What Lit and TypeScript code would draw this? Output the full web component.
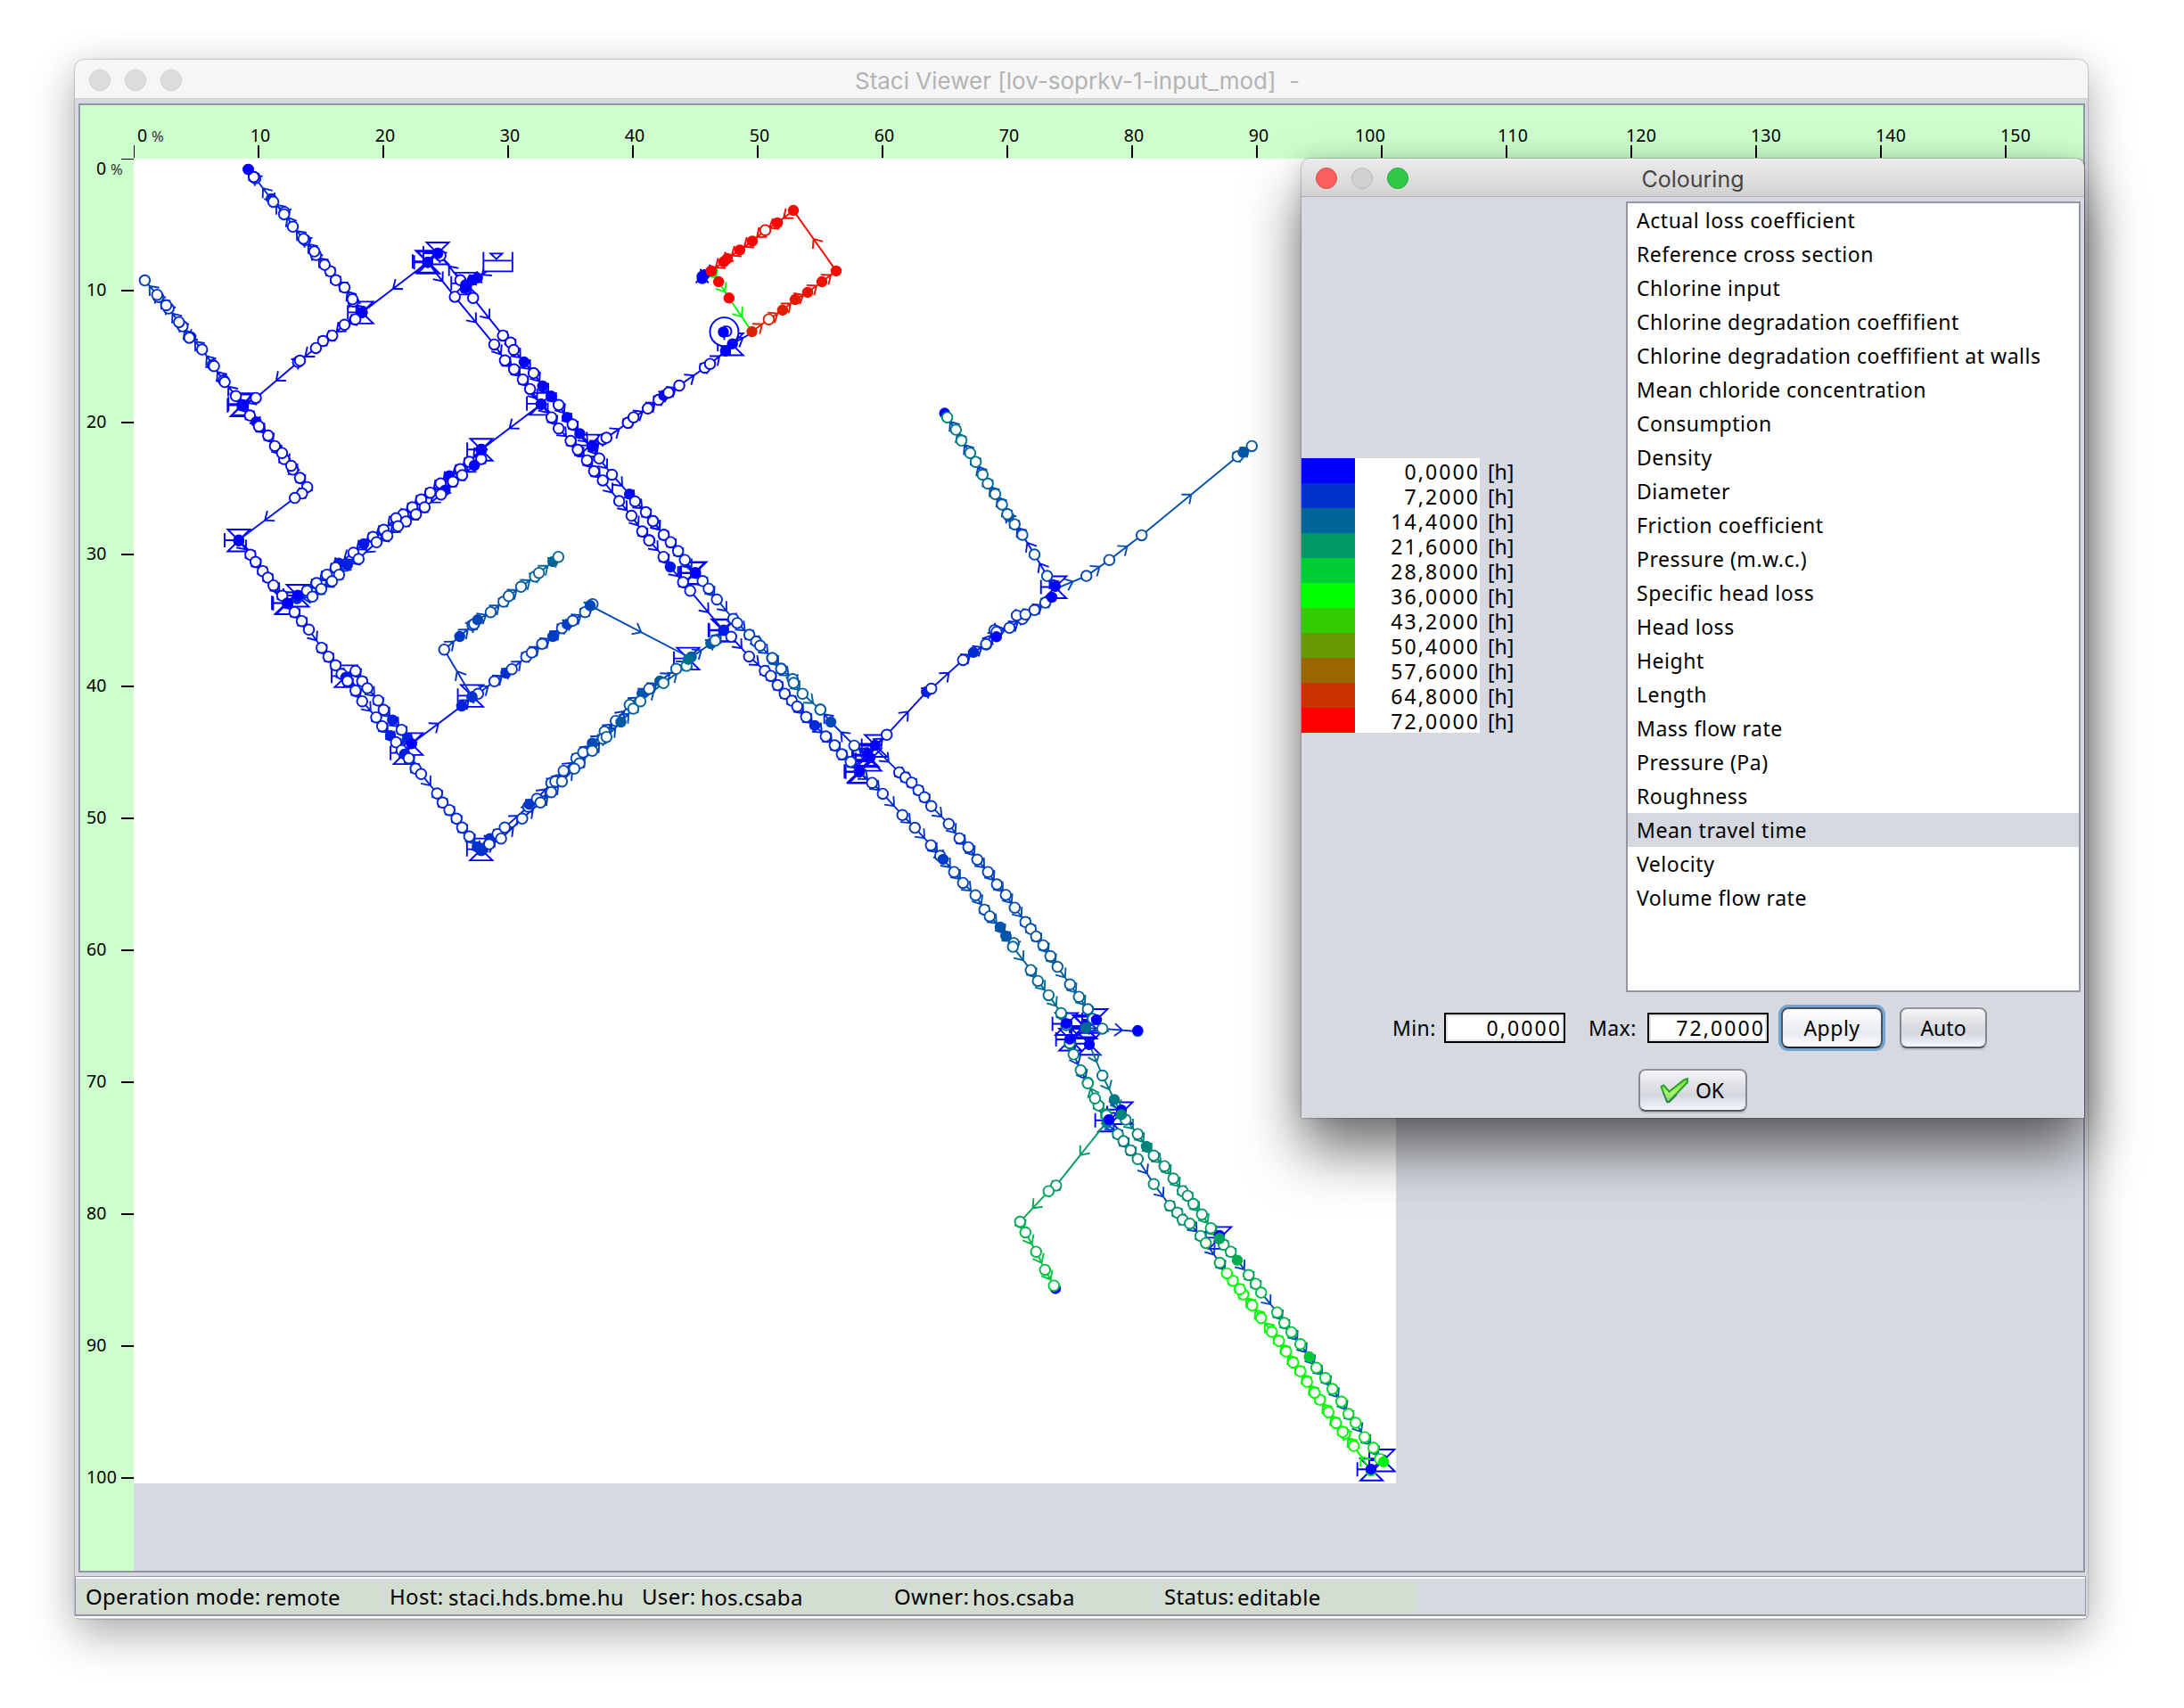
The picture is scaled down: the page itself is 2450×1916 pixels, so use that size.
import { LitElement, html, svg, css } from "lit";
import { customElement } from "lit/decorators.js";

/** Travel time in hours -> legend colour (blue 0 h, green 36 h, red 72 h). */
function hue(v: number): string {
  const t = Math.max(0, Math.min(72, v));
  return t <= 36
    ? `rgb(0,${Math.round((t / 36) * 255)},${Math.round((1 - t / 36) * 255)})`
    : `rgb(${Math.round(((t - 36) / 36) * 255)},${Math.round((1 - (t - 36) / 36) * 255)},0)`;
}

/** Survey sheets: origin of each sheet on the plan and its units per plan unit. */
const SHEETS = {
  A: [70, 50, 2.24, 2.8],
  B: [130, 500, 2.24, 3],
  C: [700, 200, 2.063, 2.8],
  D: [800, 700, 3, 2.8],
  E: [1100, 1080, 3, 2.529],
} as const;
type Sheet = keyof typeof SHEETS;
const LEFT = 150;
const TOP = 178;

interface Pt { x: number; y: number; full: boolean; bare: boolean; }
/** "x,y" junction, "x,y*" consumer, "x,y!" bend without a node. */
function read(sheet: Sheet, text: string): Pt[] {
  const [ox, oy, sx, sy] = SHEETS[sheet];
  return text.trim().split(/\s+/).map((t) => {
    const [a, b] = t.replace(/[*!]/, "").split(",").map(Number);
    return { x: ox + a / sx - LEFT, y: oy + b / sy - TOP, full: t.endsWith("*"), bare: t.endsWith("!") };
  });
}

/** sheet, nodes, node hours from/to, pipe hours from/to */
type Run = [Sheet, string, number, number, number?, number?];
const RUNS: Run[] = [
  ["A", "753,841* 731,807 729,800 709,763 687,740 673,712 659,692 637,661 633,650 610,614 606,610 579,572 558,526 557,533 525,484* 530,494 485,420 481,416", 1, 6],
  ["A", "481,416 467,392*", 0, 0],
  ["A", "918,684* 753,841* 736,863 709,880 678,914 655,931 637,953 592,997 597,993 486,1110 453,1133*", 0, 1],
  ["A", "453,1133* 436,1104 405,1055 408,1060 378,1007 381,1010 351,958 323,918* 319,921 302,885 293,872 267,829 261,819 241,793 238,786 207,741", 1, 8],
  ["A", "453,1133* 471,1165 487,1185* 494,1199 517,1228 534,1261 557,1302 552,1283 579,1335 575,1323 597,1361 615,1390 602,1410 584,1424 443,1556*", 0, 3],
  ["B", "309,320* 338,367 351,391 369,422 382,444 396,470 418,505 431,530*", 1, 3],
  ["B", "431,530* 449,560 467,590 485,619 517,680 534,710 552,739 567,768 578,780*", 2, 4],
  ["B", "578,780* 582,792 602,824 619,860 654,914 669,944 690,976* 704,998 718,1025 726,1038*", 3, 5],
  ["B", "578,780! 602,758 619,793 632,816 659,857 673,889 695,923* 718,956 733,985* 743,1003!", 3, 5],
  ["B", "726,1038* 736,1052 753,1087 767,1105 807,1170 821,1201 838,1226 856,1255 870,1285 888,1315 908,1350* 918,1362*", 4, 7],
  ["B", "918,1362* 940,1322* 938,1341 959,1307 977,1285 1036,1215 1039,1207* 1058,1188 1094,1135 1104,1130 1125,1094 1157,1052 1174,1032 1197,1001* 1228,962 1256,926 1291,872 1322,833* 1340,818 1367,792* 1408,751 1446,711*", 6, 13, 3, 8],
  ["B", "918,1362* 968,1322 1021,1255 1067,1201 1094,1166 1121,1130 1165,1069 1152,1087 1197,1027 1224,986 1233,980 1269,930* 1300,885 1318,860 1376,799 1434,741 1438,719*", 7, 16, 4, 12],
  ["B", "1438,719! 1495,666* 1506,656 1527,622!", 13, 13, 7, 9],
  ["B", "743,1003! 869,876* 895,845*", 4, 5, 1, 4],
  ["B", "895,845* 910,835 951,793 980,765* 995,752 1031,710 1045,696 1071,667 1098,642* 1121,614 1134,601* 1148,589 1179,560 1192,538* 1198,533", 6, 10],
  ["B", "1192,538* 1438,710!", 10, 12, 10, 10],
  ["B", "895,845* 825,686 864,642* 896,604 900,600 909,586* 942,560 974,525 987,506 1018,475 1053,440 1063,428 1098,390* 1112,374", 7, 15],
  ["B", "918,12* 888,54 865,79 838,101* 816,127 790,158 767,181 745,207 722,231 704,244 673,283 646,307 623,330* 597,360 560,395* 552,410 530,434 504,462 480,488 457,505*", 0, 5],
  ["B", "918,12* 918,45 901,66* 870,99 847,121 827,150* 817,164 776,207 754,231 729,255 709,271 682,303 655,325 610,381 582,401* 561,434 543,456 516,482 494,508 455,515*", 0, 6],
  ["A", "1203,1130* 1053,1272*", 0, 0],
  ["A", "918,684* 986,792 1085,942 1112,992 1135,1020 1157,1052 1175,1082 1203,1130* 1229,1171 1247,1206 1277,1245 1295,1273 1318,1306 1336,1340 1358,1369 1399,1434 1430,1480 1457,1529 1475,1557", 0, 2],
  ["B", "1340,319 1376,374 1393,408* 1425,459 1443,488 1527,622*", 2, 4, 1, 1],
  ["D", "35,19* 61,40 121,102 174,147 194,163 217,192 241,219 265,241 283,259 313,292 342,319* 379,353 409,381 433,409 463,433 492,462*", 4, 7, 2, 5],
  ["A", "1013,763! 1000,740 950,663 943,657*", 0, 0],
  ["A", "1075,705! 1043,733* 1030,740* 1013,755*", 0, 0],
  ["A", "1013,763* 1032,796 1107,914 1126,936 1134,959 1160,997* 1184,1032 1207,1072* 1228,1104* 1247,1132 1268,1171* 1282,1193 1300,1222* 1331,1262* 1349,1300 1381,1351 1425,1412* 1439,1435 1466,1469 1484,1497 1511,1540", 0, 2],
  ["C", "67,1077 92,1120 108,1143 125,1171 141,1199 165,1240* 182,1265 196,1289 215,1323 253,1384 262,1397 290,1434 306,1455 315,1468 343,1507 364,1540", 2, 10],
  ["D", "199,107 229,141 268,173 271,185 301,219 361,269", 10, 14],
  ["D", "520,410! 475,382 396,308* 361,269", 4, 13, 3, 5],
  ["A", "1331,1262* 1358,1240 1367,1235 1421,1188", 0, 0],
  ["C", "9,768 22,751 55,723 80,696 92,682* 103,673 128,651 187,595 199,583 235,543* 251,520* 290,490!", 0, 0],
  ["C", "296,482* 335,443 367,414* 396,381* 425,358* 458,325* 491,291* 392,101* 355,140* 327,163 297,197* 268,225* 239,252* 231,262* 202,291*", 67, 74],
  ["C", "204,290! 186,303* 181,315* 181,308*", 0, 0],
  ["C", "202,291* 219,325* 243,376* 296,482!", 74, 74, 37, 37],
  ["D", "545,381! 584,348 718,213* 734,203 841,113 876,89* 919,64", 3, 7, 1, 4],
  ["C", "838,1463 857,1420 862,1425 892,1412 922,1384 909,1373 929,1370 950,1356 975,1333 990,1316!", 7, 8, 4, 6],
  ["C", "998,1282! 979,1249 950,1182 922,1120 904,1087 891,1063* 887,1055 875,1025 859,992 842,959 830,931 814,891 801,863 781,824 768,790 748,751", 9, 19, 2, 9],
  ["C", "998,1290! 1070,1249 1123,1199 1198,1121 1420,874 1433,861* 1453,841", 9, 13],
  ["D", "545,390! 626,466 647,482 668,498 691,522 711,544 734,572 793,628 829,673 859,701 889,740 925,779 955,818 985,851 1015,891 1051,936 1069,958 1087,981 1111,1009 1135,1043 1159,1077 1201,1132 1231,1171 1261,1210 1278,1240 1254,1269*", 4, 15],
  ["D", "492,466* 535,499 571,533 637,600 679,640 733,695 764,728 774,739* 811,779 841,813 883,852 913,897 931,918 966,952* 985,980* 1012,1002 1009,1014 1069,1087 1093,1121 1129,1166 1171,1222 1188,1260", 5, 16],
  ["D", "1254,1269* 1310,1271 1429,1280*", 15, 17, 7, 6],
  ["E", "426,450! 424,433 397,405 385,385 361,340", 22, 20],
  ["E", "300,228 313,260 337,305 361,342", 17, 21, 8, 7],
  ["E", "366,232! 410,320 450,388* 474,431* 488,445 529,486 558,521* 583,547 619,577 649,612 680,648 697,661 716,684 745,714 775,753 804,783*", 16, 23],
  ["E", "804,783* 818,800 842,820 864,844* 902,886 926,911 944,936 998,992 1022,1022 1046,1048 1076,1082 1106,1118* 1130,1149 1160,1178 1184,1209 1214,1245 1238,1280 1262,1305 1292,1346 1322,1376 1344,1408", 23, 33, 8, 14],
  ["E", "426,455* 462,486 481,506 505,532 529,557 583,628 637,689 662,709 680,729 704,740 740,775 758,795 805,851 829,881!", 18, 24, 8, 9],
  ["E", "1314,1442* 1256,1371 1226,1336 1219,1331 1196,1306 1171,1275 1142,1240 1124,1220 1099,1189 1076,1159 1052,1134 1028,1103 1004,1073 980,1047 944,1008 914,972 884,941 873,926 849,902 829,881", 36, 35],
  ["E", "426,450! 254,632 229,648 133,735 151,765 187,820 217,871 247,916", 21, 28],
];

/** Consumers at zero hours drawn above everything else. */
const SOURCES: [Sheet, string][] = [
  ["A", "467,392* 753,841* 453,1133* 918,684* 943,655* 1203,1130* 1053,1272*"],
  ["B", "309,320* 431,530* 457,503* 743,1003* 1456,427*"],
  ["C", "230,483* 862,1440* 990,1316* 998,1282*"],
  ["D", "545,381* 520,408* 528,420* 492,460* 1188,1255* 1290,1243* 1200,1304* 1266,1321* 1429,1277*"],
  ["E", "432,445* 1314,1437*"],
];
/** Zero-hour consumers that lie beneath the run nodes. */
const BURIED: [Sheet, string][] = [
  ["C", "742,738*"],
  ["D", "1254,1260*"],
  ["E", "252,924* 474,418* 804,774* 1352,1410*"],
];
const VALVES: [Sheet, string][] = [
  ["A", "753,841 943,655 916,681 920,684 1013,750 453,1129 451,1133 1203,1128 1053,1272 1325,1259"],
  ["B", "309,318 431,530 428,529 457,504 578,775 743,1003 726,1034 895,841 1438,716 1525,620 1527,622 918,1358 1456,427 1452,429"],
  ["C", "998,1284 250,521"],
  ["D", "548,382 516,410 520,414 528,426 494,465 490,463 1190,1256 1248,1263 1254,1267 1290,1243 1202,1305 1266,1318"],
  ["E", "474,426 434,447 806,780 1356,1411 1316,1437"],
];

@customElement("pipe-plan")
class PipePlan extends LitElement {
  static styles = css`
    :host { display: block; width: 1416px; height: 1486px; background: #fff; }
    svg { display: block; }
  `;

  private pipe(a: Pt, b: Pt, color: string) {
    const len = Math.hypot(b.x - a.x, b.y - a.y) || 1;
    const ux = (b.x - a.x) / len, uy = (b.y - a.y) / len;
    const tx = (a.x + b.x) / 2 + ux * 2.5, ty = (a.y + b.y) / 2 + uy * 2.5;
    const c = -8.6, s = 7;
    const f = (n: number) => n.toFixed(1);
    return svg`<path fill="none" stroke=${color} d="M${f(a.x)} ${f(a.y)}L${f(b.x)} ${f(b.y)}M${f(tx + ux * c - uy * s)} ${f(ty + uy * c + ux * s)}L${f(tx)} ${f(ty)}L${f(tx + ux * c + uy * s)} ${f(ty + uy * c - ux * s)}"/>`;
  }
  private node(p: Pt, color: string) {
    return svg`<circle cx=${p.x.toFixed(1)} cy=${p.y.toFixed(1)} r=${p.full ? 5.3 : 5.8} stroke=${color} fill=${p.full ? color : "#fff"}/>`;
  }
  private valve(p: Pt) {
    return svg`<path fill="none" stroke="#00f" d="M${p.x - 12.5} ${p.y - 12}h25l-25 24.5h25zM${p.x} ${p.y}h-16m0 -8v16"/>`;
  }

  render() {
    const pipes: unknown[] = [];
    const nodes: unknown[] = [];
    for (const [sheet, text, n0, n1, p0 = n0, p1 = n1] of RUNS) {
      const pts = read(sheet, text);
      pts.forEach((p, i) => {
        const t = pts.length > 1 ? i / (pts.length - 1) : 0;
        if (i) pipes.push(this.pipe(pts[i - 1], p, hue(p0 + (p1 - p0) * t)));
        if (!p.bare) nodes.push(this.node(p, hue(n0 + (n1 - n0) * t)));
      });
    }
    const zero = (set: [Sheet, string][]) =>
      set.flatMap(([s, t]) => read(s, t)).map((p) => this.node(p, "#00f"));
    const lamp = read("E", "1356,1416* 474,431* 804,783*");
    const [pump] = read("C", "232,482");
    const [tank] = read("A", "1058,652");
    return html`<svg width="1416" height="1486" viewBox="0 0 1416 1486" stroke-width="1.9">
      ${VALVES.flatMap(([s, t]) => read(s, t)).map((p) => this.valve(p))}
      ${pipes}
      <path fill="#fff" stroke="#00f" d="M${tank.x} ${tank.y}v21.5h32.5v-21.5"/>
      <path fill="none" stroke="#00f" d="M${tank.x} ${tank.y + 9.5}h32.5M${tank.x + 8} ${tank.y + 1.5}h13l-6.5 6z"/>
      <circle cx=${pump.x} cy=${pump.y} r="16" fill="#fff" stroke="#00f"/>
      <path fill="none" stroke="#00f" d="M${pump.x} ${pump.y + 9}v-15h3a5 5.5 0 0 1 0 11h-3"/>
      ${zero(BURIED)}${nodes}${zero(SOURCES)}
      ${lamp.map((p, i) => this.node(p, hue([34, 19, 23][i])))}
    </svg>`;
  }
}

@customElement("percent-ruler")
class PercentRuler extends LitElement {
  static properties = { vertical: { type: Boolean } };
  static styles = css`
    :host { display: block; background: #cfc; }
    svg { display: block; }
    text { font: 19.5px "Noto Sans", sans-serif; fill: #000; letter-spacing: .2px; }
    .pct { font-size: 16.5px; fill: #333; }
  `;
  declare vertical: boolean;

  render() {
    if (this.vertical) {
      return html`<svg width="60" height="1584">
        <rect x="46" y="0" width="14" height="1"/>
        <text x="18" y="18">0</text><text class="pct" x="34" y="18">%</text>
        ${Array.from({ length: 10 }, (_, i) => svg`
          <rect x="46" y=${147 + i * 148} width="14" height="2"/>
          <text x="7" y=${154 + i * 148}>${(i + 1) * 10}</text>`)}
      </svg>`;
    }
    return html`<svg width="2247" height="60">
      <rect x="60" y="45" width="1" height="14"/>
      <text x="64" y="41">0</text><text class="pct" x="80" y="41">%</text>
      ${Array.from({ length: 15 }, (_, i) => svg`
        <rect x=${199 + i * 140} y="45" width="2" height="14"/>
        <text text-anchor="middle" x=${(i === 9 ? 187 : i === 10 ? 207 : i > 10 ? 211 : 202) + i * 140} y="41">${(i + 1) * 10}</text>`)}
    </svg>`;
  }
}

const QUANTITIES = [
  "Actual loss coefficient", "Reference cross section", "Chlorine input",
  "Chlorine degradation coeffifient", "Chlorine degradation coeffifient at walls",
  "Mean chloride concentration", "Consumption", "Density", "Diameter",
  "Friction coefficient", "Pressure (m.w.c.)", "Specific head loss", "Head loss",
  "Height", "Length", "Mass flow rate", "Pressure (Pa)", "Roughness",
  "Mean travel time", "Velocity", "Volume flow rate",
];

@customElement("colouring-dialog")
class ColouringDialog extends LitElement {
  static styles = css`
    :host {
      display: flex; flex-direction: column; width: 878px; height: 1076px; background: #d6d9e0;
      border-radius: 10px 10px 0 0; overflow: visible; color: #000;
      box-shadow: 0 0 2px rgba(0,0,0,.55), 0 36px 64px rgba(0,0,0,.56), 0 0 24px rgba(0,0,0,.12);
      font: 23px "Noto Sans", "Open Sans", sans-serif;
    }
    .bar {
      display: grid; grid-template-columns: minmax(0, 1fr) auto minmax(0, 1fr); align-items: center;
      height: 43px; flex: none; box-sizing: border-box; border-radius: 10px 10px 0 0;
      background: linear-gradient(#ebebeb, #d2d2d2); border-bottom: 1px solid #b1b1b1;
      border-top: 1px solid #f4f4f4;
    }
    .lights { display: flex; gap: 16px; padding-left: 16px; }
    .light { width: 24px; height: 24px; box-sizing: border-box; border-radius: 50%; border: 1px solid; }
    .red { background: #fc605c; border-color: #e04844; }
    .grey { background: #d0d0d0; border-color: #b9b9b9; }
    .green { background: #33c748; border-color: #25a937; }
    .title { font: 25px Inter, Roboto, sans-serif; color: #464646; padding-top: 2px; }
    .body { display: flex; height: 891px; flex: none; }
    .legend { width: 364px; padding-top: 293px; box-sizing: border-box; }
    .entry { display: flex; height: 28px; line-height: 30px; }
    .swatch { width: 60px; }
    .num { width: 140px; background: #fff; text-align: right; letter-spacing: 2.1px; }
    .unit { padding-left: 9px; }
    .list { width: 506px; height: 883px; margin-top: 5px; border: 2px solid #9296a1; background: #fff; }
    .row { height: 38px; line-height: 38px; padding-left: 10px; white-space: nowrap; letter-spacing: .53px; }
    .on { background: #d6d9e0; }
    .range { display: flex; align-items: center; height: 50px; padding: 16px 0 0 103px; }
    .field {
      width: 136px; height: 34px; box-sizing: border-box; border: 2px solid #000; background: #fff;
      box-shadow: inset 0 0 0 2px #dfe1e6; text-align: right; padding-right: 2px; line-height: 31px;
      letter-spacing: 2.1px;
    }
    .lab { width: 58px; margin-left: -1px; white-space: nowrap; letter-spacing: .4px; }
    .lab2 { width: 66px; margin-left: 26px; }
    .btn {
      box-sizing: border-box; height: 46px; border-radius: 8px; border: 2px solid #85888e;
      border-top-color: #93969c; border-bottom-color: #55575e;
      background: linear-gradient(#f6f6f8, #e2e3e6 35%, #d3d6dd 62%, #f4f6fd);
      box-shadow: 0 2px 0 #bcbfc6; display: flex; align-items: center; justify-content: center;
      line-height: 42px;
    }
    .apply {
      width: 114px; margin-left: 14px; letter-spacing: .5px; border-color: #4f525a; border-bottom-color: #22252c;
      background: linear-gradient(#fdfdfe, #eff1f4 45%, #e8eaf1 65%, #fff);
      box-shadow: 0 0 0 3px #74a4d4;
    }
    .auto { width: 98px; margin-left: 19px; }
    .okrow { display: flex; padding: 21px 0 0 378px; }
    .ok { width: 122px; height: 48px; gap: 8px; padding-right: 2px; }
  `;

  render() {
    return html`
      <div class="bar">
        <div class="lights">
          <span class="light red"></span><span class="light grey"></span><span class="light green"></span>
        </div>
        <span class="title">Colouring</span><span></span>
      </div>
      <div class="body">
        <div class="legend">
          ${Array.from({ length: 11 }, (_, i) => html`<div class="entry">
            <span class="swatch" style="background:${hue(i * 7.2)}"></span>
            <span class="num">${(i * 7.2).toFixed(4).replace(".", ",")}</span>
            <span class="unit">[h]</span>
          </div>`)}
        </div>
        <div class="list">
          ${QUANTITIES.map((q) => html`<div class="row ${q === "Mean travel time" ? "on" : ""}">${q}</div>`)}
        </div>
      </div>
      <div class="range">
        <span class="lab">Min:</span><span class="field">0,0000</span>
        <span class="lab lab2">Max:</span><span class="field">72,0000</span>
        <span class="btn apply">Apply</span><span class="btn auto">Auto</span>
      </div>
      <div class="okrow"><span class="btn ok">
        <svg width="32" height="29" viewBox="0 0 32 29">
          <defs><linearGradient id="g" x1="0" y1="0" x2="0" y2="1">
            <stop offset="0" stop-color="#6fdc3a"/><stop offset=".6" stop-color="#a9f76c"/><stop offset="1" stop-color="#7fd764"/>
          </linearGradient></defs>
          <path d="M1.5 10l3-1.500 6 7L27 2.500l4-1.500v4L10 27H8z" fill="url(#g)" stroke="#2ba32e" stroke-width="2"/>
          <path d="M4 17l4.500 10.500h2L19 19" fill="none" stroke="#3c7a70" stroke-width="1.5"/>
        </svg>OK</span></div>
    `;
  }
}

const STATUS: [string, string, number, number][] = [
  ["Operation mode:", "remote", 339, 202],
  ["Host:", "staci.hds.bme.hu", 281, 66],
  ["User:", "hos.csaba", 281, 66],
  ["Owner:", "hos.csaba", 301, 88],
  ["Status:", "editable", 294, 82],
];

@customElement("app-root")
class AppRoot extends LitElement {
  static styles = css`
    :host {
      display: block; position: relative; width: 2450px; height: 1916px; box-sizing: border-box;
      padding: 67px 0 0 84px; background: #fff; overflow: hidden;
    }
    .window {
      width: 2258px; height: 1749px; border-radius: 10px 10px 6px 6px; background: #d6d9e0;
      box-shadow: 0 0 2px rgba(0,0,0,.5), 0 18px 50px rgba(0,0,0,.3), 0 0 40px rgba(0,0,0,.06);
      display: flex; flex-direction: column;
    }
    .bar {
      display: grid; grid-template-columns: minmax(0, 1fr) auto minmax(0, 1fr); align-items: center;
      height: 44px; box-sizing: border-box; background: #f6f6f6; padding-right: 9px;
      border-bottom: 1px solid #d0d0d0; border-radius: 10px 10px 0 0;
    }
    .lights { display: flex; gap: 16px; padding: 3px 0 0 16px; }
    .light { width: 24px; height: 24px; border-radius: 50%; background: #ddd; box-sizing: border-box; border: 1px solid #cbcbcb; }
    .title { font: 26px Inter, Roboto, sans-serif; color: #b3b3b3; white-space: pre; padding-top: 3px; }
    .pane {
      margin: 5px 5px 0 4px; border: 2px solid #9296a4; width: 2247px; height: 1644px;
      display: grid; grid-template-columns: 60px 1fr; grid-template-rows: 60px 1fr; box-sizing: content-box;
      overflow: hidden;
    }
    .top { grid-column: 1 / 3; }
    .status {
      display: flex; gap: 2px; height: 45px; box-sizing: border-box; margin: 4px 2px 0 0;
      padding: 5px 0 0 2px; border: solid #9296a1; border-width: 1px 1px 2px 1px;
      box-shadow: inset 0 2px #fff, 0 2px #fff; font: 24px "Noto Sans", "Open Sans", sans-serif; color: #000;
      letter-spacing: .3px;
    }
    .cell { display: flex; height: 36px; background: #d4ddd1; padding-left: 9px; box-sizing: border-box; line-height: 34px; white-space: nowrap; }
    .value { padding-top: 1px; }
    .dialog { position: absolute; left: 1460px; top: 178px; }
  `;

  render() {
    return html`
      <div class="window">
        <div class="bar">
          <div class="lights"><span class="light"></span><span class="light"></span><span class="light"></span></div>
          <span class="title">Staci Viewer [lov-soprkv-1-input_mod]  -</span><span></span>
        </div>
        <div class="pane">
          <percent-ruler class="top"></percent-ruler>
          <percent-ruler vertical></percent-ruler>
          <pipe-plan></pipe-plan>
        </div>
        <div class="status">
          ${STATUS.map(([k, v, w, lw]) => html`<div class="cell" style="width:${w}px">
            <span style="width:${lw}px">${k}</span><span class="value">${v}</span>
          </div>`)}
        </div>
      </div>
      <colouring-dialog class="dialog"></colouring-dialog>
    `;
  }
}
